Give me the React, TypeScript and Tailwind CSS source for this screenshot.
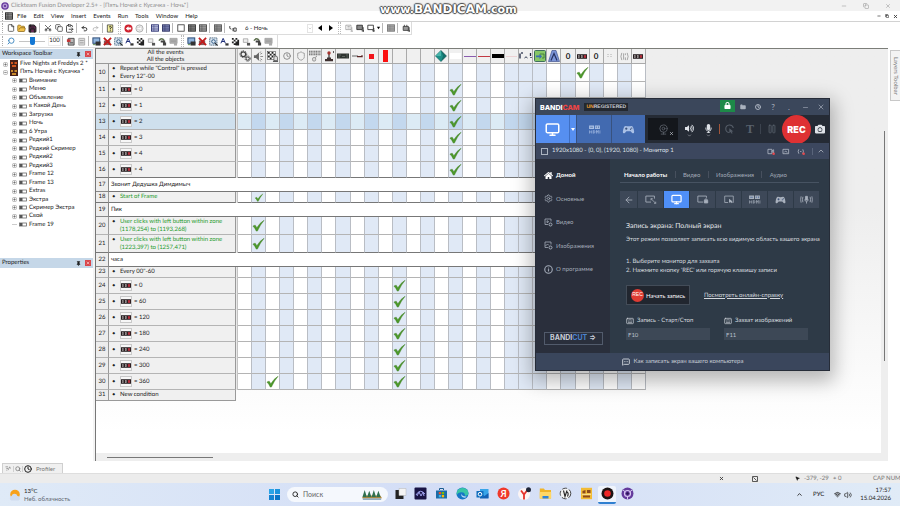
import React from "react";
import {
  ArrowLeft, ChevronDown, ChevronUp, Clock, ClipboardPaste, Copy, File, Folder, FolderOpen,
  Info, Keyboard, MessageSquareMore, Minus, Monitor, MousePointer2, Pause, Pin, Redo2, Save, Scissors,
  Search, Settings, Shield, Undo2, Volume2, Webcam, Wifi, X,
} from "lucide-react";
import { FaHome, FaMicrophone, FaVolumeUp, FaCamera, FaLock } from "react-icons/fa";

type RowKind = "text" | "counter" | "comment" | "green";
type EventRow = { id: number; kind: RowKind; text: string; text2?: string; height: string; checks?: number[]; selected?: boolean };

const rows: EventRow[] = [
  { id: 10, kind: "text", text: "Repeat while \"Control\" is pressed", text2: "Every 12''-00", height: "h-[18px]", checks: [24] },
  { id: 11, kind: "counter", text: "= 0", height: "h-[16px]", checks: [15] },
  { id: 12, kind: "counter", text: "= 1", height: "h-[16px]", checks: [15] },
  { id: 13, kind: "counter", text: "= 2", height: "h-[16px]", checks: [15], selected: true },
  { id: 14, kind: "counter", text: "= 3", height: "h-[16px]", checks: [15] },
  { id: 15, kind: "counter", text: "= 4", height: "h-[16px]", checks: [15] },
  { id: 16, kind: "counter", text: "> 4", height: "h-[16px]", checks: [15] },
  { id: 17, kind: "comment", text: "Звонит Дедушка Димдимыч", height: "h-[14px]" },
  { id: 18, kind: "green", text: "Start of Frame", height: "h-[11px]", checks: [1] },
  { id: 19, kind: "comment", text: "Пик", height: "h-[14px]" },
  { id: 20, kind: "green", text: "User clicks with left button within zone", text2: "(1178,254) to (1193,268)", height: "h-[18px]", checks: [1] },
  { id: 21, kind: "green", text: "User clicks with left button within zone", text2: "(1223,397) to (1257,471)", height: "h-[18px]", checks: [1] },
  { id: 22, kind: "comment", text: "часа", height: "h-[14px]" },
  { id: 23, kind: "text", text: "Every 00''-60", height: "h-[11px]" },
  { id: 24, kind: "counter", text: "= 0", height: "h-[16px]", checks: [11] },
  { id: 25, kind: "counter", text: "= 60", height: "h-[16px]", checks: [11] },
  { id: 26, kind: "counter", text: "= 120", height: "h-[16px]", checks: [11] },
  { id: 27, kind: "counter", text: "= 180", height: "h-[16px]", checks: [11] },
  { id: 28, kind: "counter", text: "= 240", height: "h-[16px]", checks: [11] },
  { id: 29, kind: "counter", text: "= 300", height: "h-[16px]", checks: [11] },
  { id: 30, kind: "counter", text: "= 360", height: "h-[16px]", checks: [2, 11] },
];

const frames = [
  "Внимание", "Меню", "Объявление", "в Какой День", "Загрузка", "Ночь", "6 Утра", "Редкий1", "Редкий Скример",
  "Редкий2", "Редкий3", "Frame 12", "Frame 13", "Extras", "Экстра", "Скример Экстра", "Свой", "Frame 19",
];

const menu = ["File", "Edit", "View", "Insert", "Events", "Run", "Tools", "Window", "Help"];
const columns = Array.from({ length: 29 }, (_, i) => i);

const isBlue = (i: number) => i % 2 === 1 || i === 20;

const Check = ({ small }: { small?: boolean }) => (
  <svg viewBox="0 0 14 14" className={small ? "mx-auto block h-[9px] w-[10px]" : "mx-auto block h-[13px] w-[13px]"} aria-label="action">
    <path d="M1 7.6 3.4 6.6 5.2 9.4Q8.4 4 13 1.4 8.8 6.2 5.8 13L4.6 13Q3.2 9.6 1 7.6Z" fill="#4c9a2a" stroke="#3c7a20" strokeWidth=".5" />
  </svg>
);

const Counter = () => (
  <svg viewBox="0 0 11 5" className="block h-[5px] w-[10px]" aria-hidden="true">
    <rect width="11" height="5" fill="#241c1e" />
    <path d="M1.2 1h1.6v3H1.2zM4.4 1h1.8v3H4.4z" fill="#b9b4b4" />
    <path d="M2 2v1M5.3 2v1" stroke="#241c1e" strokeWidth=".6" />
    <rect x="7.6" y="1" width="2.4" height="3" fill="#b5303c" />
  </svg>
);

const Expander = ({ open }: { open?: boolean }) => (
  <svg viewBox="0 0 5 5" className="h-[5px] w-[5px] shrink-0" aria-hidden="true">
    <rect x=".5" y=".5" width="4" height="4" rx="1" fill="#f4f4f4" stroke="#9a9a9a" strokeWidth=".6" />
    <path d={open ? "M1.3 2.5h2.4" : "M1.3 2.5h2.4M2.5 1.3v2.4"} stroke="#555" strokeWidth=".6" />
  </svg>
);

const Gears = () => (
  <svg viewBox="0 0 12 12" className="h-[12px] w-[12px]" fill="none" stroke="#3d3d3d" aria-hidden="true">
    <circle cx="4.3" cy="4.2" r="2.3" strokeWidth="1.1" />
    <circle cx="4.3" cy="4.2" r="3.4" strokeWidth="1" strokeDasharray="1.3 1.2" />
    <circle cx="8.7" cy="8.6" r="1.6" strokeWidth="1" />
    <circle cx="8.7" cy="8.6" r="2.6" strokeWidth="1" strokeDasharray="1.1 1" />
  </svg>
);

const Checker = () => (
  <svg viewBox="0 0 12 12" className="h-[11px] w-[11px]" aria-hidden="true">
    <rect x=".5" y=".5" width="9" height="9" fill="#fff" stroke="#222" strokeWidth=".5" />
    <path d="M1 1h2v2H1zM5 1h2v2H5zM3 3h2v2H3zM7 3h2v2H7zM1 5h2v2H1zM5 5h2v2H5zM3 7h2v2H3z" fill="#222" />
    <path d="M7.5 7.5a2 2 0 0 1 4 0v3h-4z" fill="#ddd" stroke="#333" strokeWidth=".7" />
    <path d="M6.5 11.3h5.5" stroke="#333" />
  </svg>
);

const headIcon = (i: number) => {
  switch (i) {
    case 0: return <Gears />;
    case 1: return (
      <svg viewBox="0 0 12 12" className="h-[11px] w-[11px]"><path d="M1 4.5h2.2L6.5 1.5v9L3.2 7.5H1z" fill="#666" /><path d="M8 3.5l2-1.2M8 6h3M8 8.5l2 1.2M7.5 2l1-1.4M7.5 10l1 1.4" stroke="#777" strokeWidth=".9" /></svg>
    );
    case 2: return <Checker />;
    case 3: return <Clock size={8} color="#777" strokeWidth={2.4} />;
    case 4: return <Shield size={10} color="#8a8a8a" strokeWidth={1.6} strokeDasharray="3 1" />;
    case 5: return (
      <svg viewBox="0 0 12 12" className="h-[12px] w-[12px]"><path d="M0 1.2h12M0 3h12M0 4.8h12" stroke="#555" strokeWidth="1.1" strokeDasharray="1.2 .5" /><rect x="3.5" y="7.5" width="3.2" height="3.6" rx="1.4" fill="#ddd" stroke="#777" strokeWidth=".7" /><path d="M6 7.5 8 6.3" stroke="#777" strokeWidth=".7" /></svg>
    );
    case 6: return (
      <svg viewBox="0 0 12 12" className="h-[12px] w-[12px]"><path d="M2 9h8v2.3H2zM4 7.6h4V9H4z" fill="#3f3030" /><path d="M6 8V3.5" stroke="#333" strokeWidth="1.2" /><circle cx="6" cy="3" r="1.7" fill="#a5332d" /><path d="M10.5 1v2" stroke="#333" strokeWidth=".8" /></svg>
    );
    case 7: return <svg viewBox="0 0 12 6" className="h-[6px] w-[12px]"><rect y=".5" width="12" height="5" fill="#2e3330" /><path d="M1 2h3M5 3.5h3M9 2h2M1 4h2M9.5 4h1.5" stroke="#8b958d" strokeWidth=".5" /></svg>;
    case 8: return <svg viewBox="0 0 12 6" className="h-[6px] w-[12px]"><path d="M1 3h6" stroke="#555" strokeWidth=".9" /><path d="M6 3.6h5V2.2" stroke="#5a2323" strokeWidth="1.4" fill="none" /></svg>;
    case 9: return <span className="block h-[5px] w-[5px] bg-[#f1161c]" />;
    case 10: return <span className="block h-[12px] w-[5px] bg-[#fb1010]" />;
    case 14: return <svg viewBox="0 0 12 12" className="h-[12px] w-[12px]"><path d="M6 .5 11.5 6 6 11.5.5 6z" fill="#12706b" stroke="#0a3f3f" strokeWidth=".5" /><path d="M6 .5 8 6 6 11.5.5 6z" fill="#1f9088" /><path d="M6 .5 6 6 .5 6z" fill="#4bb5ab" /></svg>;
    case 15: return <span className="block h-[6px] w-[11px] bg-white" />;
    case 16: return <span className="block h-px w-[12px] bg-[#8a5cae]" />;
    case 17: return <span className="block h-px w-[12px] bg-[#c23a44]" />;
    case 18: return <span className="block h-[4px] w-[12px] bg-black" />;
    case 19: return <span className="block h-px w-[11px] bg-[#ecd2d4]" />;
    case 20: return <svg viewBox="0 0 13 8" className="h-[8px] w-[13px]"><path d="M1 1.5v5M2.2 1h1.6M11.5 1v3M12 5v1" stroke="#1b2440" strokeWidth="1.3" /><path d="M5.5 6q1.5-2.4 3 0" fill="none" stroke="#1b2440" strokeWidth=".9" /></svg>;
    case 21: return <svg viewBox="0 0 12 12" className="h-[12px] w-[12px]"><rect x=".5" y=".5" width="11" height="11" rx="1" fill="#86c765" stroke="#3f6f5c" /><path d="M2 5.500h3.500V3.800L8 6.400 5.500 9V7.300H2z" fill="#3c6fb0" /><path d="M6 4h4v4H8" fill="none" stroke="#3d7a32" strokeWidth=".8" /></svg>;
    case 22: return <svg viewBox="0 0 12 12" className="h-[12px] w-[12px]"><path d="M4 .5h4L11.5 11.5H.5z" fill="#7c95d8" stroke="#44558e" strokeWidth=".7" /><path d="M3 10.5 6 3.5l3 7" fill="none" stroke="#25305f" strokeWidth="1.2" /></svg>;
    case 23:
    case 25: return <span className="text-[8px] leading-none font-bold">0</span>;
    case 24:
    case 28: return <Counter />;
    case 26: return <svg viewBox="0 0 6 6" className="h-[6px] w-[6px]"><path d="M1 1v4M4 1v4" stroke="#a0a0a0" strokeWidth=".8" strokeDasharray="1 1" /></svg>;
    case 27: return <svg viewBox="0 0 10 10" className="h-[9px] w-[9px]"><path d="M2 1Q0 5 2 9M8 1q2 4 0 8M4 1.5v7M6 1.5v2M6 6v3" fill="none" stroke="#8a8a8a" strokeWidth=".8" /></svg>;
    default: return null;
  }
};

const ToolButton = ({ label, children }: { label: string; children: React.ReactNode }) => (
  <button aria-label={label} className="flex h-[11px] w-[11px] shrink-0 items-center justify-center text-[#222]">{children}</button>
);

const Sep = () => <span className="mx-[1px] h-[10px] w-[2px] shrink-0 border-l border-[#b8b8b8]" />;
const WideSep = () => <span className="mx-[2px] h-[12px] w-[3px] shrink-0 border-x border-dotted border-[#bbb]" />;
const Grip = () => <span className="mr-[1px] ml-[2px] h-[10px] w-[2px] shrink-0 border-l border-dotted border-[#aaa]" />;

const Grid = ({ tone, fill }: { tone: string; fill: string }) => (
  <svg viewBox="0 0 10 10" className="h-[8px] w-[8px] shrink-0" aria-hidden="true">
    <rect x=".6" y="1" width="8.8" height="8" fill={fill} stroke={tone} strokeWidth="1.1" />
    <path d="M1 3.3h8M1 5.3h8M1 7.2h8M3.6 1v8" stroke={tone} strokeWidth=".6" />
  </svg>
);

/* object filter glyphs, the same set is used twice in the second tool row */
const filterGlyphs = [
  <svg viewBox="0 0 10 10" className="h-[9px] w-[9px]"><rect x="1" y="1" width="7.6" height="6" fill="#8fb4dd" stroke="#2d4d78" strokeWidth="1.1" /><path d="M4 5h5.5v4.500H4z" fill="#333" /><path d="M1 8.5h3" stroke="#4a7d3c" /></svg>,
  <svg viewBox="0 0 10 10" className="h-[9px] w-[9px]"><path d="M1 4h7v5H1z" fill="#5a1717" opacity=".7" /><path d="M1 1l8 8M9 1 1 9" stroke="#c21c1c" strokeWidth="2" /></svg>,
  <svg viewBox="0 0 10 10" className="h-[9px] w-[9px]"><rect x=".8" y="1" width="8" height="8" fill="#dce7f2" stroke="#34546f" strokeWidth=".9" strokeDasharray="1.500 .6" /><circle cx="5" cy="5" r="2" fill="none" stroke="#23507c" /><path d="M6.5 6.5 9.5 9.5" stroke="#222" strokeWidth="1.2" /></svg>,
  <svg viewBox="0 0 10 10" className="h-[9px] w-[9px]"><path d="M1 7 3.5 1.5 6 7M2 5h3" fill="none" stroke="#1c2d78" strokeWidth="1.1" /><path d="M6 7h3.5v2.5H6z" fill="#333" /></svg>,
  <svg viewBox="0 0 10 10" className="h-[9px] w-[9px]"><path d="M1 1h2v2H1zM5 1h2v2H5zM3 3h2v2H3zM7 3h2v2H7zM1 5h2v2H1zM5 5h4v4.5H5zM3 7h2v2H3z" fill="#222" /></svg>,
  <svg viewBox="0 0 10 10" className="h-[9px] w-[9px]"><path d="M1.5 2h5v4h-5z" fill="#eee" stroke="#999" strokeWidth=".8" /><path d="M5.5 6.5H9v3H5.5z" fill="#555" /></svg>,
  <svg viewBox="0 0 10 10" className="h-[9px] w-[9px]"><path d="M1 4q3-4 6 0" fill="none" stroke="#5d6f4e" strokeWidth="1.6" /><path d="M3 4h5v2H3zM5.5 6H9v3.4H5.5z" fill="#444" /></svg>,
  <svg viewBox="0 0 10 10" className="h-[9px] w-[9px]"><path d="M1 1.5h8v5.5H1z" fill="#b5b5b5" stroke="#999" strokeWidth=".8" /><path d="M2 3.5h6M2 5.2h6" stroke="#888" strokeWidth=".6" /><path d="M5.5 6.5H9v3H5.5z" fill="#aaa" /></svg>,
];

const MenuBar = () => (
  <nav className="flex h-[11px] items-center border-b border-[#d2d2d2] bg-white">
    <Grip />
    <Grid tone="#222" fill="#999" />
    <div className="flex flex-1 gap-[7px] pl-[4px]">
      {menu.map((m) => <button key={m} className="leading-none">{m}</button>)}
    </div>
    <div className="flex gap-[4px] pr-[2px] text-[#333]">
      <button aria-label="Minimize frame"><Minus size={4} strokeWidth={4} /></button>
      <button aria-label="Restore frame"><Copy size={4} strokeWidth={4} /></button>
      <button aria-label="Close frame"><X size={5} strokeWidth={4} /></button>
    </div>
  </nav>
);

const Toolbars = () => (
  <div className="flex h-[26px] flex-col bg-white">
    <div className="flex h-[13px] w-fit items-center border-r border-b border-[#dcdcdc]">
      <Grip />
      <ToolButton label="New"><File size={8} /></ToolButton>
      <ToolButton label="Open"><FolderOpen size={9} fill="#f2c14a" color="#8a6414" /></ToolButton>
      <ToolButton label="Save"><Save size={9} fill="#6b2a57" strokeWidth={3} /></ToolButton>
      <Sep />
      <ToolButton label="Cut"><Scissors size={8} className="-rotate-90" /></ToolButton>
      <ToolButton label="Copy"><Copy size={8} /></ToolButton>
      <ToolButton label="Paste"><ClipboardPaste size={9} /></ToolButton>
      <Sep />
      <ToolButton label="Undo"><Undo2 size={7} strokeWidth={3} /></ToolButton>
      <ToolButton label="Redo"><Redo2 size={7} color="#999" /></ToolButton>
      <Sep />
      <ToolButton label="Contents">
        <svg viewBox="0 0 10 10" className="h-[9px] w-[9px]"><path d="M1.5 1h6v8h-6z" fill="#f3ee9a" stroke="#333" strokeWidth=".8" /><path d="M3.5 3.4Q5 1.8 6 3.4 6 4.4 4.8 5v1M4.8 7v1" fill="none" stroke="#111" strokeWidth="1" /></svg>
      </ToolButton>
      <WideSep />
      <ToolButton label="Back">
        <svg viewBox="0 0 10 10" className="h-[9px] w-[9px]"><circle cx="5" cy="5" r="4.5" fill="#cf2330" /><path d="M2 5l3-2.6v1.6h3v2H5v1.6z" fill="#fff" /></svg>
      </ToolButton>
      <ToolButton label="Forward">
        <svg viewBox="0 0 10 10" className="h-[9px] w-[9px]"><circle cx="5" cy="5" r="4" fill="#eee" stroke="#aaa" /><path d="M8 5 5 2.6v1.6H2v2h3v1.2z" fill="#fff" stroke="#aaa" strokeWidth=".4" /></svg>
      </ToolButton>
      <Sep />
      <ToolButton label="Storyboard"><Grid tone="#2b3070" fill="#c6cbe8" /></ToolButton>
      <ToolButton label="Frame editor"><Grid tone="#2b2f60" fill="#8088b8" /></ToolButton>
      <Sep />
      <ToolButton label="Frame"><svg viewBox="0 0 10 10" className="h-[8px] w-[8px]"><rect x="1" y="1" width="8" height="8" fill="#fff" stroke="#333" /></svg></ToolButton>
      <ToolButton label="Events"><Grid tone="#333" fill="#888" /></ToolButton>
      <ToolButton label="Event list"><Grid tone="#444" fill="#aaa" /></ToolButton>
      <Sep />
      <ToolButton label="Data"><Grid tone="#555" fill="#999" /></ToolButton>
      <Sep />
      <ToolButton label="Zoom text">
        <svg viewBox="0 0 10 10" className="h-[8px] w-[8px]"><path d="M1 2.5v3M1 5.5l2 1M6 5h3v4H6zM5 9V5" fill="none" stroke="#333" strokeWidth="1.1" /></svg>
      </ToolButton>
      <div className="flex w-[76px] items-center justify-between pl-[7px]">
        <select aria-label="Frame" defaultValue="n" className="w-[56px] appearance-none bg-transparent leading-none outline-none">
          <option value="n">6 - Ночь</option>
        </select>
        <span className="mr-[1px] flex h-[9px] w-[6px] items-center justify-center border border-[#e4e4e4]"><ChevronDown size={5} color="#777" /></span>
      </div>
      <ToolButton label="Previous"><svg viewBox="0 0 6 6" className="h-[6px] w-[6px]"><path d="M5 0v6L1 3z" /></svg></ToolButton>
      <ToolButton label="Next"><svg viewBox="0 0 6 6" className="h-[6px] w-[6px]"><path d="M1 0v6l4-3z" /></svg></ToolButton>
      <WideSep />
      <ToolButton label="Run project"><svg viewBox="0 0 10 10" className="h-[8px] w-[8px]"><path d="M1 1.5h6.5V7H1zM3 3.2h3M3 5h3M8.5 4v5M7 9h3" fill="none" stroke="#888" strokeWidth=".8" /></svg></ToolButton>
      <ToolButton label="Run application"><svg viewBox="0 0 10 10" className="h-[8px] w-[8px]"><path d="M1 1.5h7V7H1z" fill="#888" stroke="#222" /><path d="M9 4v6M7 8.5h3" stroke="#222" /></svg></ToolButton>
      <ToolButton label="Run frame"><svg viewBox="0 0 10 10" className="h-[8px] w-[8px]"><path d="M1 1.5h7V7H1z" fill="#fff" stroke="#222" /><path d="M8.5 5v5M6.5 8.5h3" stroke="#222" /></svg></ToolButton>
      <svg viewBox="0 0 5 5" className="h-[4px] w-[5px]"><path d="M.5 1h4L2.500 4z" /></svg>
      <Sep />
      <ToolButton label="Stop"><Grid tone="#777" fill="#aaa" /></ToolButton>
      <Sep />
      <ToolButton label="Build"><svg viewBox="0 0 10 10" className="h-[8px] w-[8px]"><path d="M1.500 3h6.500v5H1.500z" fill="#999" stroke="#333" /><path d="M3 1v2M6 1v2M9 4v6M7 8.500h3" stroke="#333" /></svg></ToolButton>
    </div>
    <div className="flex h-[13px] w-fit items-center border-r border-b border-[#dcdcdc]">
      <Grip />
      <ToolButton label="Zoom"><Search size={8} color="#4a8fc4" strokeWidth={3} className="-scale-x-100" /></ToolButton>
      <input
        type="range" aria-label="Zoom level" defaultValue={50}
        className="mx-[3px] h-[9px] w-[26px] appearance-none bg-[linear-gradient(#c4c4c4,#c4c4c4)] bg-[length:100%_1px] bg-center bg-no-repeat [&::-webkit-slider-thumb]:h-[8px] [&::-webkit-slider-thumb]:w-[5px] [&::-webkit-slider-thumb]:appearance-none [&::-webkit-slider-thumb]:rounded-b-[2px] [&::-webkit-slider-thumb]:bg-[#1277d4]"
      />
      <span className="w-[13px] border border-[#ececec] text-center leading-[8px]">100</span>
      <Sep />
      <ToolButton label="Insert condition"><svg viewBox="0 0 10 10" className="h-[9px] w-[9px]"><path d="M2.500 1.500h6.500V9H2.500z" fill="#bbb" stroke="#444" /><path d="M1 2.500h4v3H1z" fill="#c23434" /><path d="M4 6.500h4" stroke="#444" /></svg></ToolButton>
      <ToolButton label="Insert group"><svg viewBox="0 0 10 10" className="h-[9px] w-[9px]"><path d="M2 1.500h6.500V9H2z" fill="#ddd" stroke="#aaa" /><path d="M3 4h4.500M3 6.500h4.500" stroke="#999" /></svg></ToolButton>
      <Sep />
      {filterGlyphs.map((g, i) => <ToolButton key={i} label={`Filter ${i + 1}`}>{g}</ToolButton>)}
      <WideSep />
      {filterGlyphs.map((g, i) => <ToolButton key={i} label={`Hide ${i + 1}`}>{g}</ToolButton>)}
      <span className="w-[3px]" />
    </div>
  </div>
);

const PanelHeader = ({ title }: { title: string }) => (
  <div className="flex h-[10px] w-full items-center bg-[#c5d7e8] pr-[2px] pl-[2px]">
    <h2 className="flex-1 leading-none">{title}</h2>
    <button aria-label={`Pin ${title}`} className="mr-[4px]"><Pin size={5} fill="#222" strokeWidth={3} /></button>
    <button aria-label={`Close ${title}`} className="flex h-[6px] w-[6px] items-center justify-center bg-[#d9464b] text-white"><X size={4} strokeWidth={3} /></button>
  </div>
);

const Sidebar = () => (
  <aside className="flex w-[93px] shrink-0 flex-col bg-white pt-[1px]">
    <PanelHeader title="Workspace Toolbar" />
    <ul className="mt-[1px] flex h-[169px] flex-col justify-between whitespace-nowrap">
      {["Five Nights at Freddys 2 *", "Пять Ночей с Кусачка *"].map((name, i) => (
        <li key={name} className="flex h-[8px] items-center gap-[2px] pl-[3px] leading-none">
          <Expander open={i === 1} />
          <svg viewBox="0 0 8 8" className="h-[8px] w-[8px] shrink-0"><rect width="8" height="8" fill="#46211a" /><path d="M1 2h2v2H1zM4.500 2H7v2H4.500zM2 5h4v2H2z" fill={i ? "#c98a2a" : "#d2561f"} /></svg>
          {name}
        </li>
      ))}
      {frames.map((name) => (
        <li key={name} className="flex h-[8px] items-center gap-[2px] pl-[12px] leading-none">
          {name === "Frame 19" ? <span className="h-px w-[5px] bg-[#ccc]" /> : <Expander />}
          <svg viewBox="0 0 8 5" className="h-[5px] w-[8px] shrink-0"><rect x=".5" y="1" width="7" height="3" fill="#fff" stroke="#666" strokeWidth=".8" /><path d="M1 1h2.500v3H1z" fill="#555" /></svg>
          {name}
        </li>
      ))}
    </ul>
    <div className="h-[29px]" />
    <PanelHeader title="Properties" />
  </aside>
);

const EventTable = () => (
  <table className="w-[550px] table-fixed border-separate border-spacing-0 text-left">
    <colgroup>
      <col className="w-[13px]" />
      <col className="w-[127px]" />
      <col className="w-[2px]" />
      {columns.map((c) => <col key={c} />)}
    </colgroup>
    <thead>
      <tr className="h-[15px]">
        <th colSpan={2} className="border-r border-b border-[#999] bg-[#eee] p-0 text-center leading-[7px] font-normal">
          All the events<br />All the objects
        </th>
        <th className="border-r border-[#bbb] bg-[#e2e2e2] p-0" />
        {columns.map((c) => (
          <th key={c} className="border-r border-b border-[#aaa] bg-[#f0f0f0] p-0">
            <span className="flex h-[14px] items-center justify-center overflow-hidden">{headIcon(c)}</span>
          </th>
        ))}
      </tr>
    </thead>
    <tbody>
      {rows.map((r, idx) => {
        if (r.kind === "comment") {
          return (
            <tr key={r.id} className={r.height}>
              <td className="border-r border-b border-[#888] bg-[#ededed] p-0 text-center leading-none">{r.id}</td>
              <td colSpan={31} className="border-r border-b border-[#777] bg-white p-0 pl-[2px] leading-none">{r.text}</td>
            </tr>
          );
        }
        const edge = rows[idx + 1]?.kind === "comment" ? "border-b-[#777]" : "border-b-[#b4b4b4]";
        return (
          <tr key={r.id} className={r.height}>
            <td className={`border-r border-b border-r-[#999] p-0 text-center leading-none ${edge} ${r.selected ? "bg-[#cfe0ed]" : "bg-[#ededed]"}`}>{r.id}</td>
            <td className={`border-r border-b border-r-[#999] p-0 ${edge} ${r.selected ? "bg-[#cfe0ed]" : "bg-[#f0f0f0]"}`}>
              <div className={`flex items-start pl-[3px] leading-[8px] whitespace-nowrap ${r.kind === "green" ? "text-[#1f9b2c]" : ""}`}>
                <span className={`w-[8px] shrink-0 text-[#222] ${r.kind === "counter" ? "self-center" : ""}`}>•{r.kind === "text" && r.text2 && <><br />•</>}</span>
                {r.kind === "counter" ? (
                  <span className="flex items-center gap-[2px]">
                    <span className="flex h-[11px] w-[12px] items-center justify-center border border-[#c9c9c9] bg-[#f7f7f7]"><Counter /></span>
                    {r.text}
                  </span>
                ) : (
                  <span>{r.text}{r.text2 && <><br />{r.text2}</>}</span>
                )}
              </div>
            </td>
            <td className="border-r border-[#c4c4c4] bg-[#e8e8e8] p-0" />
            {columns.map((c) => (
              <td
                key={c}
                className={`border-r border-b border-r-[#b9bdc4] p-0 ${edge} ${
                  r.selected ? (isBlue(c) ? "bg-[#c3d8ee]" : "bg-[#dcebf5]") : isBlue(c) ? "bg-[#e0e9f6]" : "bg-white"
                }`}
              >
                {r.checks?.includes(c) && <Check small={r.height === "h-[11px]"} />}
              </td>
            ))}
          </tr>
        );
      })}
      <tr className="h-[11px]">
        <td className="border-r border-b border-[#999] bg-[#ededed] p-0 text-center leading-none">31</td>
        <td className="border-r border-b border-[#999] bg-[#f0f0f0] p-0">
          <div className="flex items-center pl-[3px] leading-none"><span className="w-[8px]">•</span>New condition</div>
        </td>
      </tr>
    </tbody>
  </table>
);

const Editor = () => (
  <main className="flex min-w-0 flex-1 flex-col border-t border-l border-t-[#7c7e79] border-l-[#777] bg-[#eee]">
    <div className="flex min-h-0 flex-1">
      <div className="min-w-0 flex-1 overflow-hidden bg-linear-to-b from-[#eeeeee] from-40% to-[#ffffff] to-95%">
        <EventTable />
      </div>
      <div className="flex w-[7px] flex-col items-center bg-[#eee] pt-[82px]"><span className="h-[230px] w-px bg-[#777]" /></div>
    </div>
    <div className="flex h-[8px] items-center bg-[#eee] pl-[11px]"><span className="h-px w-[106px] bg-[#777]" /></div>
  </main>
);

const HdmiIcon = () => (
  <svg viewBox="0 0 14 10" className="h-[9px] w-[13px]" fill="currentColor" aria-hidden="true">
    <path d="M1 .5h5.500v4H1zM7.500.5H13v4H7.500z" />
    <path d="M2.200 2.500h3M9 1.500v2M11.400 1.500v2" stroke="#3a5a92" strokeWidth=".7" />
    <path d="M1.500 6v3.500M4 6v3.500M1.500 7.700h2.500M5.800 6v3.200q1.800 0 1.800-1.600T5.800 6.300M9.200 9.500V6l1 2 1-2v3.500M13 6v3.500" fill="none" stroke="currentColor" strokeWidth=".7" />
  </svg>
);

const Gamepad = ({ big }: { big?: boolean }) => (
  <svg viewBox="0 0 14 10" className={big ? "h-[9px] w-[13px]" : "h-[8px] w-[11px]"} aria-hidden="true">
    <path d="M3.800 1Q7 2 10.200 1 12.500 1 13.300 7.500 13.300 10 11 8.800L9.300 7H4.700L3 8.800Q.7 10 .7 7.500 1.500 1 3.800 1z" fill="currentColor" />
    <path d="M4.500 2.800v2.600M3.200 4.100h2.600" stroke="#2f456e" strokeWidth=".9" />
    <circle cx="9.300" cy="4.700" r=".7" fill="#2f456e" /><circle cx="10.600" cy="3.400" r=".7" fill="#2f456e" />
  </svg>
);

const modes = [
  { label: "Область", icon: <svg viewBox="0 0 14 10" className="h-[9px] w-[12px]" fill="none" stroke="currentColor"><path d="M11 4V1H1v7h6" /><path d="M7 4l5.500 5.500M7 4v2M7 4h2M12.500 9.500v-2M12.500 9.500h-2" strokeWidth=".9" /></svg> },
  { label: "Экран", icon: <Monitor size={11} strokeWidth={2.6} /> },
  { label: "Окно", icon: <svg viewBox="0 0 14 10" className="h-[9px] w-[12px]" fill="none" stroke="currentColor"><path d="M7 8H1V1h10v2" /><path d="M8.500 6h4v3h-4z" fill="currentColor" /><path d="M9.300 6V4.500h2.400V6" /></svg> },
  { label: "Вокруг мыши", icon: <svg viewBox="0 0 14 10" className="h-[9px] w-[12px]" fill="none" stroke="currentColor"><path d="M6 8.500H2V1h10v7.500h-1" strokeWidth=".9" /><path d="M7 4v5l1.300-1.200L10 9.500l.5-1.700L11 7z" fill="currentColor" stroke="none" /></svg> },
  { label: "HDMI", icon: <HdmiIcon /> },
  { label: "Игра", icon: <Gamepad /> },
  { label: "Звук", icon: <svg viewBox="0 0 14 10" className="h-[9px] w-[13px]" fill="none" stroke="currentColor"><path d="M6 1.500h2v4H6z" fill="currentColor" /><path d="M5 5q0 2 2 2t2-2M7 7v2.500M3 2q-1 3 0 6M11 2q1 3 0 6M1 1.500q-1 3.500 0 7M13 1.500q1 3.500 0 7" strokeWidth=".9" /></svg> },
];

const SideItem = ({ icon, label, active }: { icon: React.ReactNode; label: string; active?: boolean }) => (
  <button className={`flex h-[8px] items-center gap-[3px] pl-[8px] leading-none ${active ? "font-bold text-white" : "text-[#a3abb8]"}`}>
    {icon}{label}
  </button>
);

const Bandicam = () => (
  <section className="absolute top-[98px] left-[535px] flex w-[295px] flex-col border border-[#262c38] bg-[#2e3a47] text-[#c4cad3] shadow-[0_6px_18px_4px_rgba(0,0,0,0.28)]">
    <header className="flex h-[16px] items-center bg-[#3b475b] pl-[4px]">
      <h1 className="font-['Inter',sans-serif] text-[7px] leading-none font-extrabold text-white">BANDI<span className="text-[#ef4444]">CAM</span></h1>
      <span className="ml-[5px] bg-[#232830] px-[2px] font-['Liberation_Sans',sans-serif] text-[5px] leading-[8px] font-bold text-[#c8ccd2]"><span className="text-[#f0a030]">UN</span>REGISTERED</span>
      <div className="ml-auto flex items-center text-[#aab2bf]">
        <button aria-label="Unlock" className="mb-[3px] flex h-[12px] w-[15px] items-center justify-center bg-[#1d8a48] text-white"><FaLock size={7} /></button>
        <button aria-label="Folder" className="flex w-[15px] justify-center"><Folder size={6} fill="currentColor" /></button>
        <button aria-label="History" className="flex w-[15px] justify-center"><Clock size={6} strokeWidth={4} /></button>
        <button aria-label="Help" className="w-[16px] text-center text-[8px] leading-none">?</button>
        <button aria-label="Tray" className="w-[16px] text-center text-[8px] leading-none">.</button>
        <button aria-label="Minimize" className="flex w-[16px] justify-center"><Minus size={7} /></button>
        <button aria-label="Close" className="flex w-[16px] justify-center"><X size={8} /></button>
      </div>
    </header>
    <div className="flex h-[28px] items-stretch bg-[#252b35]">
      <button aria-label="Screen mode" className="flex w-[33px] items-center justify-center bg-[#568ff0] text-white"><Monitor size={15} strokeWidth={2.4} /></button>
      <button aria-label="Screen options" className="flex w-[7px] items-center justify-center border-l border-[#3f6fc2] bg-[#568ff0] text-white"><svg viewBox="0 0 4 3" className="h-[3px] w-[4px]"><path d="M0 0h4L2 3z" fill="currentColor" /></svg></button>
      <button aria-label="Device mode" className="flex w-[35px] items-center justify-center border-l border-[#38527f] bg-[#426ab0] text-[#a9c0e6]"><HdmiIcon /></button>
      <button aria-label="Game mode" className="flex w-[34px] items-center justify-center border-l border-[#38527f] bg-[#426ab0] text-[#a9c0e6]"><Gamepad big /></button>
      <button aria-label="Webcam" className="mx-[3px] my-[3px] flex w-[30px] items-center justify-center bg-[#14171c] pl-[6px] text-[#555b64]"><Webcam size={11} /><X size={5} strokeWidth={3} className="mt-[8px] text-[#c4c8cf]" /></button>
      <button aria-label="Speakers" className="flex w-[16px] flex-col items-center justify-center pt-[4px] text-[#dfe3e8]"><FaVolumeUp size={9} /><ChevronDown size={5} /></button>
      <button aria-label="Microphone" className="flex w-[22px] flex-col items-center justify-center pt-[4px] text-[#dfe3e8]"><FaMicrophone size={9} /><ChevronDown size={5} /></button>
      <span className="my-[9px] w-px bg-[#a2563a]" />
      <button aria-label="Mouse effects" className="flex w-[20px] items-center justify-center text-[#555d68]">
        <svg viewBox="0 0 10 10" className="h-[10px] w-[10px]"><path d="M4 8.500A3.800 3.800 0 1 1 8.300 4" fill="none" stroke="currentColor" strokeWidth="1.100" /><path d="M4.300 4.300v4.900L5.700 8l1 1.800.9-.5-1-1.700h1.800z" fill="currentColor" /></svg>
      </button>
      <button aria-label="Text overlay" className="w-[20px] text-center font-['Liberation_Serif',serif] text-[12px] font-bold text-[#59616c]">T</button>
      <span className="my-[9px] w-px bg-[#3c434e]" />
      <button aria-label="Pause" className="flex w-[21px] items-center justify-center text-[#59616c]"><Pause size={10} /></button>
      <button className="my-auto h-[29px] w-[29px] shrink-0 rounded-full bg-[#de3133] font-['Inter',sans-serif] text-[9px] font-black text-white">REC</button>
      <button aria-label="Capture" className="flex flex-1 items-center justify-center text-[#dfe3e8]"><FaCamera size={10} /></button>
    </div>
    <div className="flex h-[16px] items-center bg-[#3c475e] pl-[5px]">
      <input type="checkbox" aria-label="Monitor area" className="mr-[4px] h-[7px] w-[7px] appearance-none border border-[#aab3c0]" />
      <span className="leading-none text-[#dde1e7]">1920x1080 - (0, 0), (1920, 1080) - Монитор 1</span>
      <div className="ml-auto flex items-center gap-[7px] pr-[4px]">
        {["M1 1.500h4.500v5H1zM5.500 3.500 7.500 2v4z", "M1 1.500h6.500v5H1zM2.500 5 4 3.500l2 1.500", "M2 1.500Q.500 4 2 6.500M6.500 1.500Q8 4 6.500 6.500M3.500 4h1.500"].map((d, i) => (
          <svg key={d} viewBox="0 0 9 8" className="h-[7px] w-[8px]" fill="none" stroke="#b5bcc8"><path d={d} strokeWidth=".9" />{i !== 1 && <circle cx="7.500" cy="6.500" r="1.500" fill="#e5484d" stroke="none" />}</svg>
        ))}
        <span className="-mr-[3px] h-[7px] w-px bg-[#59647a]" />
        <ChevronUp size={8} />
      </div>
    </div>
    <div className="flex h-[194px]">
      <div className="flex w-[74px] flex-col bg-[#2a2f3c] pt-[12px] pb-[8px]">
        <div className="flex h-[102px] flex-col justify-between">
          <SideItem icon={<FaHome size={9} />} label="Домой" active />
          <SideItem icon={<Settings size={9} />} label="Основные" />
          <SideItem icon={<svg viewBox="0 0 9 9" className="h-[9px] w-[9px]" fill="none" stroke="currentColor"><path d="M4 6.500H1V1h6v2.500M3 2.700v2l1.600-1z" strokeWidth=".8" /><circle cx="6.500" cy="6.500" r="1.500" /></svg>} label="Видео" />
          <SideItem icon={<svg viewBox="0 0 9 9" className="h-[9px] w-[9px]" fill="none" stroke="currentColor"><path d="M4 6.500H1V1h6v2.500M1.500 5l2-2 1.500 1.500" strokeWidth=".8" /><circle cx="6.500" cy="6.500" r="1.500" /></svg>} label="Изображения" />
          <SideItem icon={<Info size={9} strokeWidth={3} />} label="О программе" />
        </div>
        <button className="mx-auto mt-auto flex h-[13px] w-[59px] items-center justify-center border border-[#525b6c] font-['Inter',sans-serif] text-[7px] font-bold text-[#c6ccd6]">
          BANDI<span className="text-[#4a83cf]">CUT</span><span className="ml-[2px]">⇒</span>
        </button>
      </div>
      <div className="flex min-w-0 flex-1 flex-col px-[10px] pt-[12px]">
        <div className="flex h-[12px] justify-between border-b border-[#475362] pr-[32px] pl-[4px] leading-[8px] text-[#a3abb8]">
          <button className="h-[8px] font-bold text-white">Начало работы</button>
          <span className="h-[7px] w-px bg-[#47505e]" />
          <button className="h-[8px]">Видео</button>
          <span className="h-[7px] w-px bg-[#47505e]" />
          <button className="h-[8px]">Изображения</button>
          <span className="h-[7px] w-px bg-[#47505e]" />
          <button className="h-[8px]">Аудио</button>
        </div>
        <div className="mt-[8px] flex h-[17px] gap-px text-[#a9b1bd]">
          <button aria-label="Назад" className="flex w-[17px] items-center justify-center bg-[#3d4858]"><ArrowLeft size={10} /></button>
          {modes.map((m, i) => (
            <button key={m.label} aria-label={m.label} className={`flex flex-1 items-center justify-center ${i === 1 ? "bg-[#4f8ff7] text-white" : "bg-[#3d4858]"}`}>{m.icon}</button>
          ))}
        </div>
        <div className="flex flex-col pl-[6px] text-[#d5d9df]">
          <h2 className="mt-[14px] text-[7px] leading-[9px] text-[#e4e7eb]">Запись экрана: Полный экран</h2>
          <p className="mt-[5px] leading-[8px] whitespace-nowrap">Этот режим позволяет записать всю видимую область вашего экрана</p>
          <ol className="mt-[13px] leading-[9px]">
            <li>1. Выберите монитор для захвата</li>
            <li>2. Нажмите кнопку 'REC' или горячую клавишу записи</li>
          </ol>
          <div className="mt-[10px] flex items-center gap-[14px]">
            <button className="flex h-[20px] w-[64px] items-center gap-[2px] border border-[#434c58] bg-[#21262f] pl-[4px] whitespace-nowrap text-white">
              <span className="flex h-[13px] w-[13px] shrink-0 items-center justify-center rounded-full bg-[#de3b33] font-['Liberation_Sans',sans-serif] text-[5px]">REC</span>
              Начать запись
            </button>
            <a href="#help" className="underline">Посмотреть онлайн-справку</a>
          </div>
          <div className="mt-[12px] flex gap-[14px]">
            {[["Запись - Старт/Стоп", "F10"], ["Захват изображений", "F11"]].map(([label, key]) => (
              <label key={key} className="flex w-[84px] flex-col gap-[3px] whitespace-nowrap">
                <span className="flex items-center gap-[3px] leading-[8px]"><Keyboard size={8} />{label}</span>
                <input readOnly value={key} className="h-[12px] w-full bg-[#3d4856] pl-[2px] text-[#b9c0ca]" />
              </label>
            ))}
          </div>
        </div>
      </div>
    </div>
    <footer className="flex h-[17px] items-center justify-center gap-[4px] bg-[#3a465c]">
      <MessageSquareMore size={8} strokeWidth={3} />Как записать экран вашего компьютера
    </footer>
  </section>
);

const apps = [
  { name: "Task view", icon: <><rect x="1.500" y="3" width="8" height="9" fill="#222" /><path d="M5 1.500h7v7H5z" fill="#f4f4f4" stroke="#b5b5b5" strokeWidth=".5" /></> },
  { name: "Fusion", icon: <><rect x=".5" y=".5" width="12" height="12" rx="1" fill="#191445" /><path d="M2 8q4-7 9-1M3 9l2-4 2 4 2-4 1 4" fill="none" stroke="#9fa3ee" /></> },
  { name: "Store", icon: <><path d="M1 3.500h11v8H1z" fill="#1b6ca8" /><path d="M4.500 3V1.500h4V3" fill="none" stroke="#1b5c90" /><path d="M3.800 5h2.300v2.300H3.800z" fill="#f25022" /><path d="M6.800 5h2.300v2.300H6.800z" fill="#7fba00" /><path d="M3.800 8h2.300v2.300H3.800z" fill="#35b5ee" /><path d="M6.800 8h2.300v2.300H6.800z" fill="#ffb900" /></> },
  { name: "Edge", icon: <><circle cx="6.500" cy="6.500" r="6" fill="#1676c6" /><path d="M.7 6A6 6 0 0 1 12.500 6Q12.500 9 9 8.700 9 5 5 5.300 2 5.500.7 8z" fill="#39c5a6" /><path d="M5.500 6.500q0 3 5 3Q10.500 11 7.500 10.500 4.500 9.500 5.500 6.500z" fill="#dcefff" opacity=".8" /></> },
  { name: "Outlook", icon: <><path d="M4 2h8.500v9H4z" fill="#38a5e8" /><path d="M4 6l4.500 3L12.500 6v5.500H4z" fill="#1560b4" /><path d="M.5 4h7v6.500h-7z" fill="#0f6cbd" /><circle cx="4" cy="7.200" r="1.800" fill="none" stroke="#fff" /></> },
  { name: "Yandex", icon: <><circle cx="6.500" cy="6.500" r="6" fill="#f0392b" /><text x="6.500" y="9.600" textAnchor="middle" fontSize="9" fontWeight="700" fill="#fff">Я</text></> },
  { name: "Yandex Browser", icon: <><circle cx="6" cy="7" r="6" fill="#fbf4f4" /><path d="M3 3.500 6 7.500 9 3.500M6 7.500v5" stroke="#e5322c" strokeWidth="1.800" fill="none" /><circle cx="10.500" cy="2.700" r="2.500" fill="#1f2538" /></> },
  { name: "Explorer", icon: <><path d="M.8 1.500h4l1.200 1.500h6v8.500H.8z" fill="#f0b429" /><path d="M.8 5h11.400v6.500H.8z" fill="#ffd766" /><path d="M3.500 9h6v2.500h-6z" fill="#2f83d8" /></> },
  { name: "Audio", icon: <><circle cx="6.500" cy="6.500" r="5.300" fill="#f2f2f2" stroke="#333" strokeWidth=".9" strokeDasharray="5 2" /><path d="M4.500 3.500l1.500 6L8 3.500M8 5q2 1 .5 4.500" fill="none" stroke="#222" strokeWidth="1.100" /></> },
  { name: "Game", icon: <><rect x="1" y=".8" width="11" height="11.400" fill="#f2bb35" /><path d="M2.500 4l3-1v3.500h-3zM7 3h3.500v3H7zM3 8.500h7v2H3z" fill="#8c4a1c" /><path d="M2 7.300h9" stroke="#fbe7a0" /></> },
  { name: "Bandicam", icon: <><circle cx="6.500" cy="6.500" r="6" fill="#1c1414" /><circle cx="6.500" cy="6.500" r="3.300" fill="#ee2626" /></> },
  { name: "Clickteam", icon: <><circle cx="6.500" cy="6.500" r="6" fill="#643b9c" /><circle cx="6.500" cy="6.500" r="3" fill="none" stroke="#d9c8f2" strokeWidth="1.200" /><circle cx="6.500" cy="6.500" r="1.300" fill="#2a1455" /><path d="M2 3l2.500 2M11 3 8.500 5M6.500 9.500v3" stroke="#d9c8f2" /></> },
];

const Taskbar = () => (
  <footer className="flex h-[23px] items-center bg-linear-to-r from-[#dfeaf7] via-[#d3ddf6] to-[#e0ebf7]">
    <button className="flex flex-1 items-center gap-[3px] pl-[9px] text-left leading-[8px]">
      <svg viewBox="0 0 12 12" className="h-[12px] w-[12px]"><circle cx="6" cy="5.500" r="4.800" fill="#f7a11b" /><path d="M2.500 11.500a2.400 2.400 0 0 1 0-4.600A3.200 3.200 0 0 1 8.500 7a2.300 2.300 0 0 1 .8 4.500z" fill="#cfdcf0" /></svg>
      <span>13°C<br /><span className="text-[#5d6470]">Неб. облачность</span></span>
    </button>
    <div className="flex items-center pl-[6px]">
      <button aria-label="Start" className="mr-[7px] grid h-[11px] w-[11px] grid-cols-2 gap-px">
        <span className="bg-[#2ba4e6]" /><span className="bg-[#1b93dd]" /><span className="bg-[#1583d2]" /><span className="bg-[#0a74c6]" />
      </button>
      <label className="flex h-[15px] w-[101px] items-center rounded-full bg-[#f5f8fd] pl-[5px]">
        <Search size={7} strokeWidth={3} />
        <input aria-label="Поиск" placeholder="Поиск" className="ml-[4px] w-[58px] bg-transparent text-[7px] outline-none placeholder:text-[#666]" />
        <svg viewBox="0 0 22 12" className="h-[11px] w-[22px] shrink-0"><path d="M0 10h22L20 7H2z" fill="#c98f3c" /><path d="M3 1l2.500 8h-5zM8 2l2.500 7h-5zM13 1l2.500 8h-5zM18 2l2.500 7h-5z" fill="#2f7050" /><path d="M1 11h20" stroke="#386a8a" /></svg>
      </label>
      <div className="ml-[3px] flex w-[246px] justify-between">
        {apps.map((a) => (
          <button key={a.name} aria-label={a.name} className={`flex h-[18px] w-[18px] flex-col items-center justify-center rounded-[2px] border-b-2 ${a.name === "Bandicam" ? "border-[#2f7fd0] bg-[#eff4fc]" : "border-transparent"}`}>
            <svg viewBox="0 0 13 13" className="h-[13px] w-[13px]">{a.icon}</svg>
          </button>
        ))}
      </div>
    </div>
    <div className="flex flex-1 items-center justify-end pr-[9px] text-[#222]">
      <ChevronUp size={7} strokeWidth={3} />
      <span className="mx-[10px]">РУС</span>
      <Wifi size={7} strokeWidth={3} />
      <Volume2 size={8} className="mr-[8px] ml-[3px]" />
      <time className="text-right leading-[8px]">17:57<br />15.04.2026</time>
    </div>
  </footer>
);

export default function App() {
  return (
    <div className="relative flex h-screen flex-col overflow-hidden bg-white font-['Lato','Open_Sans',sans-serif] text-[6px] text-[#1c1c1c] [text-rendering:geometricPrecision]">
      <header className="flex h-[11px] items-center bg-[#f2f2f2] pl-[1px] text-[#8f8f8f]">
        <svg viewBox="0 0 8 8" className="mr-[2px] h-[8px] w-[8px]"><circle cx="4" cy="4" r="3.800" fill="#6a3fa0" /><circle cx="4" cy="4" r="1.900" fill="none" stroke="#e3d6f5" strokeWidth=".8" /></svg>
        <span className="flex-1 leading-none">Clickteam Fusion Developer 2.5+ - [Пять Ночей с Кусачка - Ночь*]</span>
        <div className="flex gap-[16px] pr-[9px]">
          <button aria-label="Minimize window"><Minus size={6} /></button>
          <button aria-label="Restore window"><Copy size={6} /></button>
          <button aria-label="Close window"><X size={6} /></button>
        </div>
      </header>
      <MenuBar />
      <Toolbars />
      <div className="flex min-h-0 flex-1">
        <Sidebar />
        <div className="w-[2px] bg-[#f4f4f4]" />
        <Editor />
        <div className="w-[12px] pt-[2px] pl-[2px]">
          <button className="flex h-[51px] w-[10px] items-start justify-center border border-r-0 border-[#c8c8c8] bg-[#f3f3f3] text-[#777] [writing-mode:vertical-rl]"><span className="pt-[1px] leading-[8px]">Layers Toolbar</span></button>
        </div>
      </div>
      <div className="flex h-[12px] items-end pl-[2px]">
        <div className="flex h-[10px] items-center border border-b-0 border-[#cfcfcf] bg-[#f0f0f0] text-[#777]">
          <button aria-label="Layers" className="flex w-[10px] justify-center"><svg viewBox="0 0 6 6" className="h-[5px] w-[6px]"><path d="M0 1h3M1 3h2M1 5h1M3 5l2-4 1 2" fill="none" stroke="#777" strokeWidth=".8" /></svg></button>
          <button aria-label="Find" className="flex w-[10px] justify-center border-x border-[#cfcfcf]"><Search size={6} strokeWidth={3} /></button>
          <button className="flex w-[39px] items-center gap-[4px] pl-[1px] leading-none"><Clock size={8} strokeWidth={3} color="#222" />Profiler</button>
        </div>
      </div>
      <div className="flex h-[10px] items-center justify-end border-t border-[#dedede] bg-[#ececec] text-[#777]">
        <X size={5} strokeWidth={4} color="#333" />
        <svg viewBox="0 0 6 6" className="mr-[37px] ml-[28px] h-[6px] w-[6px]"><path d="M.5.5h5v5h-5zM1.500 1.500l3 3" fill="none" stroke="#333" strokeWidth=".8" /></svg>
        <MousePointer2 size={5} fill="#111" color="#111" />
        <span className="w-[33px] pl-[4px] leading-none">-379, -29</span>
        <span className="w-[40px] leading-none">⌖ 0</span>
        <span className="w-[27px] leading-none whitespace-nowrap">CAP NUM</span>
      </div>
      <Taskbar />
      <Bandicam />
      <div className="absolute top-[2px] left-[380px] font-['DejaVu_Sans',sans-serif] text-[11px] leading-[14px] font-bold whitespace-nowrap text-white [text-shadow:1px_0_1px_#444,-1px_0_1px_#444,0_1px_1px_#444,0_-1px_1px_#444]">
        www.<span className="text-[12px]">BANDICAM</span>.com
      </div>
    </div>
  );
}
